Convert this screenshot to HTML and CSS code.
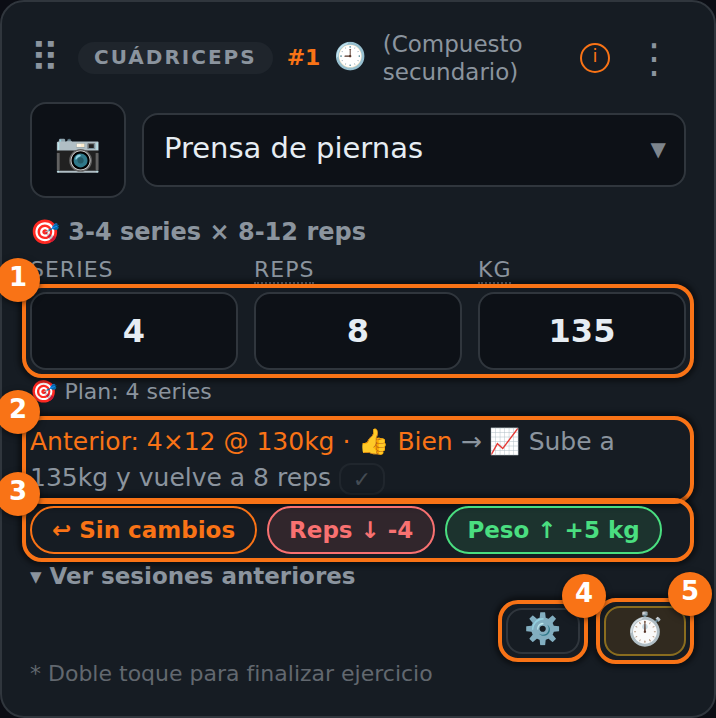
FILE: index.html
```html
<!DOCTYPE html>
<html lang="es">
<head>
  <meta charset="UTF-8">
  <meta name="viewport" content="width=device-width, initial-scale=1">
  <title>Ejercicio</title>
  <link rel="stylesheet" href="styles.css">
</head>
<body>

  <main class="card">
    <header class="card-header">
      <span class="drag-handle">⠿</span>
      <span class="muscle">CUÁDRICEPS</span>
      <span class="order">#1</span>
      <span class="clock">🕘</span>
      <span class="kind">(Compuesto secundario)</span>
      <button type="button" class="info-btn" aria-label="Información">i</button>
      <button type="button" class="menu-btn" aria-label="Menú">⋮</button>
    </header>

    <div class="exercise">
      <button type="button" class="photo-btn" aria-label="Foto">📷</button>
      <div class="select-wrap">
        <select class="select" aria-label="Ejercicio">
          <option>Prensa de piernas</option>
        </select>
        <span class="arrow">▼</span>
      </div>
    </div>

    <p class="target">🎯 3-4 series × 8-12 reps</p>

    <div class="labels">
      <label for="series">SERIES</label>
      <label for="reps"><span class="hint">REPS</span></label>
      <label for="kg"><span class="hint">KG</span></label>
    </div>
    <div class="fields mark">
      <input type="text" id="series" inputmode="numeric" value="4">
      <input type="text" id="reps" inputmode="numeric" value="8">
      <input type="text" id="kg" inputmode="decimal" value="135">
      <span class="badge">1</span>
    </div>

    <p class="plan">🎯 Plan: 4 series</p>

    <div class="previous mark">
      <span class="last">Anterior: 4×12 @ 130kg · 👍 Bien</span> → 📈 Sube a 135kg y vuelve a 8 reps
      <button type="button" class="check-btn" aria-label="Aplicar">✓</button>
      <span class="badge">2</span>
    </div>

    <div class="actions mark">
      <button type="button" class="pill">↩ Sin cambios</button>
      <button type="button" class="pill pill-red">Reps ↓ -4</button>
      <button type="button" class="pill pill-green">Peso ↑ +5 kg</button>
      <span class="badge">3</span>
    </div>

    <button type="button" class="history">▾ Ver sesiones anteriores</button>

    <div class="tools">
      <div class="mark mark-right">
        <button type="button" class="tool" aria-label="Ajustes">⚙️</button>
        <span class="badge">4</span>
      </div>
      <div class="mark mark-right">
        <button type="button" class="tool timer" aria-label="Descanso">⏱️</button>
        <span class="badge">5</span>
      </div>
    </div>

    <p class="note">* Doble toque para finalizar ejercicio</p>
  </main>

</body>
</html>
```
FILE: styles.css
```css
* {
  box-sizing: border-box;
}

body {
  margin: 0;
  background-color: #0b0d14;
  color: #8b949e;
  font-family: "DejaVu Sans", "Noto Color Emoji", sans-serif;
  font-size: 22px;
  line-height: 28px;
  overflow-x: hidden;
}

p {
  margin: 0;
}

button,
input,
select {
  margin: 0;
  padding: 0;
  font-family: inherit;
  color: inherit;
  background: none;
  border: none;
}

button {
  cursor: pointer;
}

.card {
  padding: 28px;
  background-color: #161c23;
  border: 2px solid #30363d;
  border-radius: 24px;
}

/* header */
.card-header {
  display: flex;
  align-items: center;
  height: 56px;
}

.drag-handle {
  width: 34px;
  font-size: 40px;
  line-height: 48px;
}

.muscle {
  margin-left: 14px;
  padding: 0 16px;
  height: 32px;
  line-height: 30px;
  font-size: 20px;
  font-weight: bold;
  letter-spacing: 2px;
  background-color: #1f252c;
  border-radius: 16px;
}

.order {
  margin-left: 14px;
  color: #f97316;
  font-weight: bold;
}

.clock {
  margin-left: 14px;
  padding-bottom: 4px;
  font-size: 26px;
}

.kind {
  flex: 1;
  margin-left: 16px;
  font-size: 23px;
}

.info-btn {
  width: 30px;
  height: 30px;
  padding-bottom: 4px;
  font-size: 18px;
  line-height: 20px;
  color: #f97316;
  border: 2px solid #f97316;
  border-radius: 50%;
}

.menu-btn {
  width: 44px;
  margin: 0 10px 0 22px;
  font-size: 40px;
  line-height: 48px;
}

/* exercise picker */
.exercise {
  display: flex;
  align-items: center;
  gap: 16px;
  margin-top: 16px;
}

.photo-btn {
  width: 96px;
  height: 96px;
  padding-top: 4px;
  font-size: 38px;
  background-color: #0d1117;
  border: 2px solid #30363d;
  border-radius: 16px;
}

.select-wrap {
  position: relative;
  flex: 1;
}

.select {
  display: block;
  width: 100%;
  height: 74px;
  padding: 0 56px 4px 20px;
  font-size: 29px;
  color: #e6edf3;
  background-color: #0d1117;
  border: 2px solid #30363d;
  border-radius: 16px;
  appearance: none;
}

.arrow {
  position: absolute;
  top: 22px;
  right: 20px;
  font-size: 20px;
  color: #7d858d;
  pointer-events: none;
}

.target {
  margin-top: 20px;
  font-size: 24px;
  font-weight: bold;
}

/* series, reps, kg */
.labels,
.fields {
  display: grid;
  grid-template-columns: repeat(3, minmax(0, 1fr));
  gap: 16px;
}

.labels {
  height: 28px;
  margin-top: 10px;
  letter-spacing: 1px;
}

.hint {
  border-bottom: 2px dotted #6e7681;
}

.fields {
  margin-top: 8px;
}

.fields input {
  width: 100%;
  height: 78px;
  font-size: 32px;
  font-weight: bold;
  text-align: center;
  color: #e6edf3;
  background-color: #0d1117;
  border: 2px solid #30363d;
  border-radius: 16px;
}

.plan {
  margin-top: 8px;
}

/* numbered marks */
.mark {
  position: relative;
}

.mark::after {
  content: "";
  position: absolute;
  inset: -8px;
  border: 4px solid #f97316;
  border-radius: 20px;
  box-shadow: 0 0 4px 4px rgba(0, 0, 0, 0.4);
  pointer-events: none;
}

.badge {
  position: absolute;
  z-index: 1;
  top: -34px;
  left: -34px;
  width: 44px;
  height: 44px;
  font-size: 26px;
  font-weight: bold;
  line-height: 38px;
  text-align: center;
  color: #fff;
  background-color: #f97316;
  border-radius: 50%;
  box-shadow: 0 2px 6px rgba(0, 0, 0, 0.5);
}

.mark-right .badge {
  left: auto;
  right: -26px;
}

.previous {
  margin-top: 18px;
  font-size: 25px;
  line-height: 36px;
}

.last {
  color: #f97316;
}

.check-btn {
  width: 46px;
  height: 32px;
  font-size: 22px;
  vertical-align: middle;
  border: 2px solid #30363d;
  border-radius: 12px;
  opacity: 0.4;
}

.actions {
  display: flex;
  flex-wrap: wrap;
  gap: 10px;
  margin-top: 10px;
}

.pill {
  height: 48px;
  padding: 0 20px;
  font-size: 23px;
  font-weight: bold;
  color: #f97316;
  border: 2px solid #f97316;
  border-radius: 24px;
}

.pill-red {
  color: #f87171;
  background-color: rgba(248, 113, 113, 0.12);
  border-color: #f87171;
}

.pill-green {
  color: #4ade80;
  background-color: rgba(74, 222, 128, 0.12);
  border-color: #4ade80;
}

.history {
  display: block;
  margin-top: 8px;
  font-size: 23px;
  font-weight: bold;
  line-height: 28px;
}

/* footer */
.tools {
  display: flex;
  justify-content: flex-end;
  align-items: center;
  gap: 24px;
  margin-top: 16px;
}

.tool {
  display: block;
  width: 74px;
  height: 46px;
  padding-bottom: 4px;
  font-size: 30px;
  line-height: 36px;
  border: 2px solid #30363d;
  border-radius: 16px;
}

.timer {
  width: 82px;
  height: 50px;
  font-size: 32px;
  background-color: #312a1f;
  border-color: #8a6d1f;
}

.note {
  margin-top: 4px;
  color: #62686f;
}
```
